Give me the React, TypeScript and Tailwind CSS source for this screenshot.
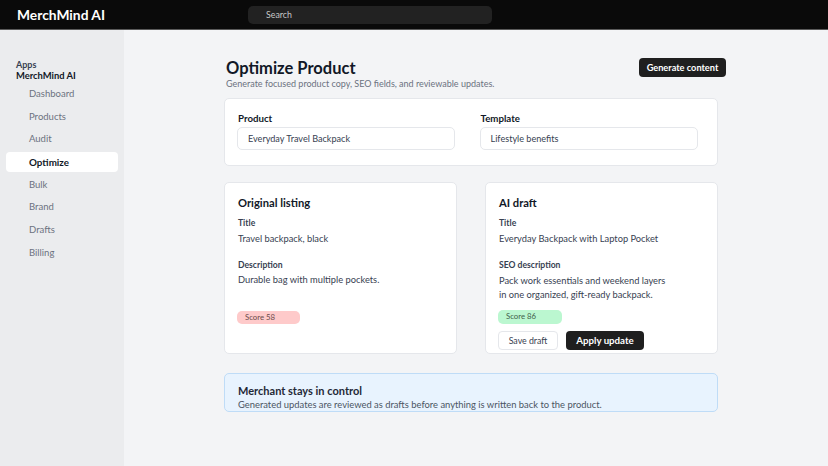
import React from "react";

const nav = ["Dashboard", "Products", "Audit", "Optimize", "Bulk", "Brand", "Drafts", "Billing"];

export default function App() {
  return (
    <div className="w-[828px] h-[466px] overflow-hidden flex flex-col bg-[#f3f4f6] text-[#1f2937]" style={{ fontFamily: 'Lato, "Noto Sans", sans-serif' }}>
      <header className="h-[30px] shrink-0 bg-[#0a0a0a] border-b border-[#5a5a5a] flex items-center">
        <div className="w-[248px] pl-[17px] text-white font-bold text-[13.8px] leading-none">MerchMind AI</div>
        <div className="w-[244px] h-[18px] rounded-[5px] bg-[#222222] flex items-center pl-[18px] text-[8.8px] text-[#c8c8c8]">Search</div>
      </header>
      <div className="flex flex-1">
        <aside className="w-[124px] shrink-0 bg-[#ebecee] pt-[29px] px-[6px]">
          <div className="pl-[10px] text-[9px] font-bold text-[#374151] leading-[11px]">Apps</div>
          <div className="pl-[10px] text-[9.4px] font-bold text-[#111827] leading-[12px]">MerchMind AI</div>
          <nav className="mt-[2px] flex flex-col gap-[2.7px]">
            {nav.map((n) => (
              <div
                key={n}
                className={
                  "h-[20px] flex items-center pl-[23px] rounded-[4px] " +
                  (n === "Optimize" ? "bg-white font-bold text-[#111827] text-[9.8px]" : "text-[#6b7280] text-[9.5px]")
                }
              >
                {n}
              </div>
            ))}
          </nav>
        </aside>
        <main className="flex-1 pl-[100px] pt-[28px]">
          <div className="w-[502px] flex items-start justify-between">
            <div className="pl-[2px]">
              <h1 className="text-[16.5px] font-bold leading-[20px] text-[#111827]">Optimize Product</h1>
              <p className="text-[9px] leading-[11px] text-[#6b7280]">Generate focused product copy, SEO fields, and reviewable updates.</p>
            </div>
            <button className="h-[19px] w-[87px] rounded-[4px] bg-[#1f1f1f] text-white text-[9.2px] font-bold">Generate content</button>
          </div>
          <section className="mt-[9px] w-[494px] h-[68px] bg-white border border-[#e5e7eb] rounded-[5px] px-[12px] pt-[12px] grid grid-cols-2 gap-[17px]">
            <div>
              <div className="text-[9.7px] font-bold leading-[14px] text-[#111827] pl-[1px]">Product</div>
              <div className="mt-[2px] h-[23px] w-[218px] border border-[#e5e7eb] rounded-[5px] flex items-center pl-[10px] text-[9.1px] text-[#374151]">Everyday Travel Backpack</div>
            </div>
            <div>
              <div className="text-[9.7px] font-bold leading-[14px] text-[#111827] pl-[1px]">Template</div>
              <div className="mt-[2px] h-[23px] w-[218px] border border-[#e5e7eb] rounded-[5px] flex items-center pl-[10px] text-[9.1px] text-[#374151]">Lifestyle benefits</div>
            </div>
          </section>
          <div className="mt-[16px] w-[494px] grid grid-cols-2 gap-[28px]">
            <section className="h-[172px] bg-white border border-[#e5e7eb] rounded-[5px] pl-[13px] pt-[13px]">
              <h2 className="text-[11.2px] font-bold leading-[14px] text-[#111827]">Original listing</h2>
              <div className="mt-[7px] text-[8.6px] font-bold leading-[12px] text-[#374151]">Title</div>
              <div className="mt-[3px] text-[9.3px] leading-[14px] text-[#374151]">Travel backpack, black</div>
              <div className="mt-[13px] text-[8.6px] font-bold leading-[12px] text-[#374151]">Description</div>
              <div className="mt-[2px] text-[9.3px] leading-[14px] text-[#374151]">Durable bag with multiple pockets.</div>
              <div className="mt-[24px] -ml-[1px] w-[63px] h-[13px] rounded-[5px] bg-[#fecaca] flex items-center pl-[8px] text-[7.8px] text-[#6b4b4b]">Score 58</div>
            </section>
            <section className="h-[172px] bg-white border border-[#e5e7eb] rounded-[5px] pl-[13px] pt-[13px]">
              <h2 className="text-[11.2px] font-bold leading-[14px] text-[#111827]">AI draft</h2>
              <div className="mt-[7px] text-[8.6px] font-bold leading-[12px] text-[#374151]">Title</div>
              <div className="mt-[3px] text-[9.3px] leading-[14px] text-[#374151]">Everyday Backpack with Laptop Pocket</div>
              <div className="mt-[13px] text-[8.6px] font-bold leading-[12px] text-[#374151]">SEO description</div>
              <div className="mt-[3px] text-[9.3px] leading-[13.5px] text-[#374151] w-[172px]">Pack work essentials and weekend layers in one organized, gift-ready backpack.</div>
              <div className="mt-[9px] -ml-[1px] w-[64px] h-[14px] rounded-[5px] bg-[#bbf7d0] flex items-center pl-[8px] text-[7.8px] text-[#3f5f4b]">Score 86</div>
              <div className="mt-[7px] -ml-[1px] flex gap-[8px]">
                <button className="h-[19px] w-[60px] rounded-[4px] border border-[#e5e7eb] bg-white text-[8.8px] text-[#374151]">Save draft</button>
                <button className="h-[19px] w-[78px] rounded-[4px] bg-[#1f1f1f] text-white text-[9.7px] font-bold">Apply update</button>
              </div>
            </section>
          </div>
          <section className="mt-[19px] w-[494px] h-[39px] rounded-[5px] bg-[#e8f3fe] border border-[#bfdcf7] pl-[13px] pt-[10px]">
            <div className="text-[11px] font-bold leading-[14px] text-[#1f2937]">Merchant stays in control</div>
            <div className="text-[9.4px] leading-[13px] text-[#4b5563]">Generated updates are reviewed as drafts before anything is written back to the product.</div>
          </section>
        </main>
      </div>
    </div>
  );
}
